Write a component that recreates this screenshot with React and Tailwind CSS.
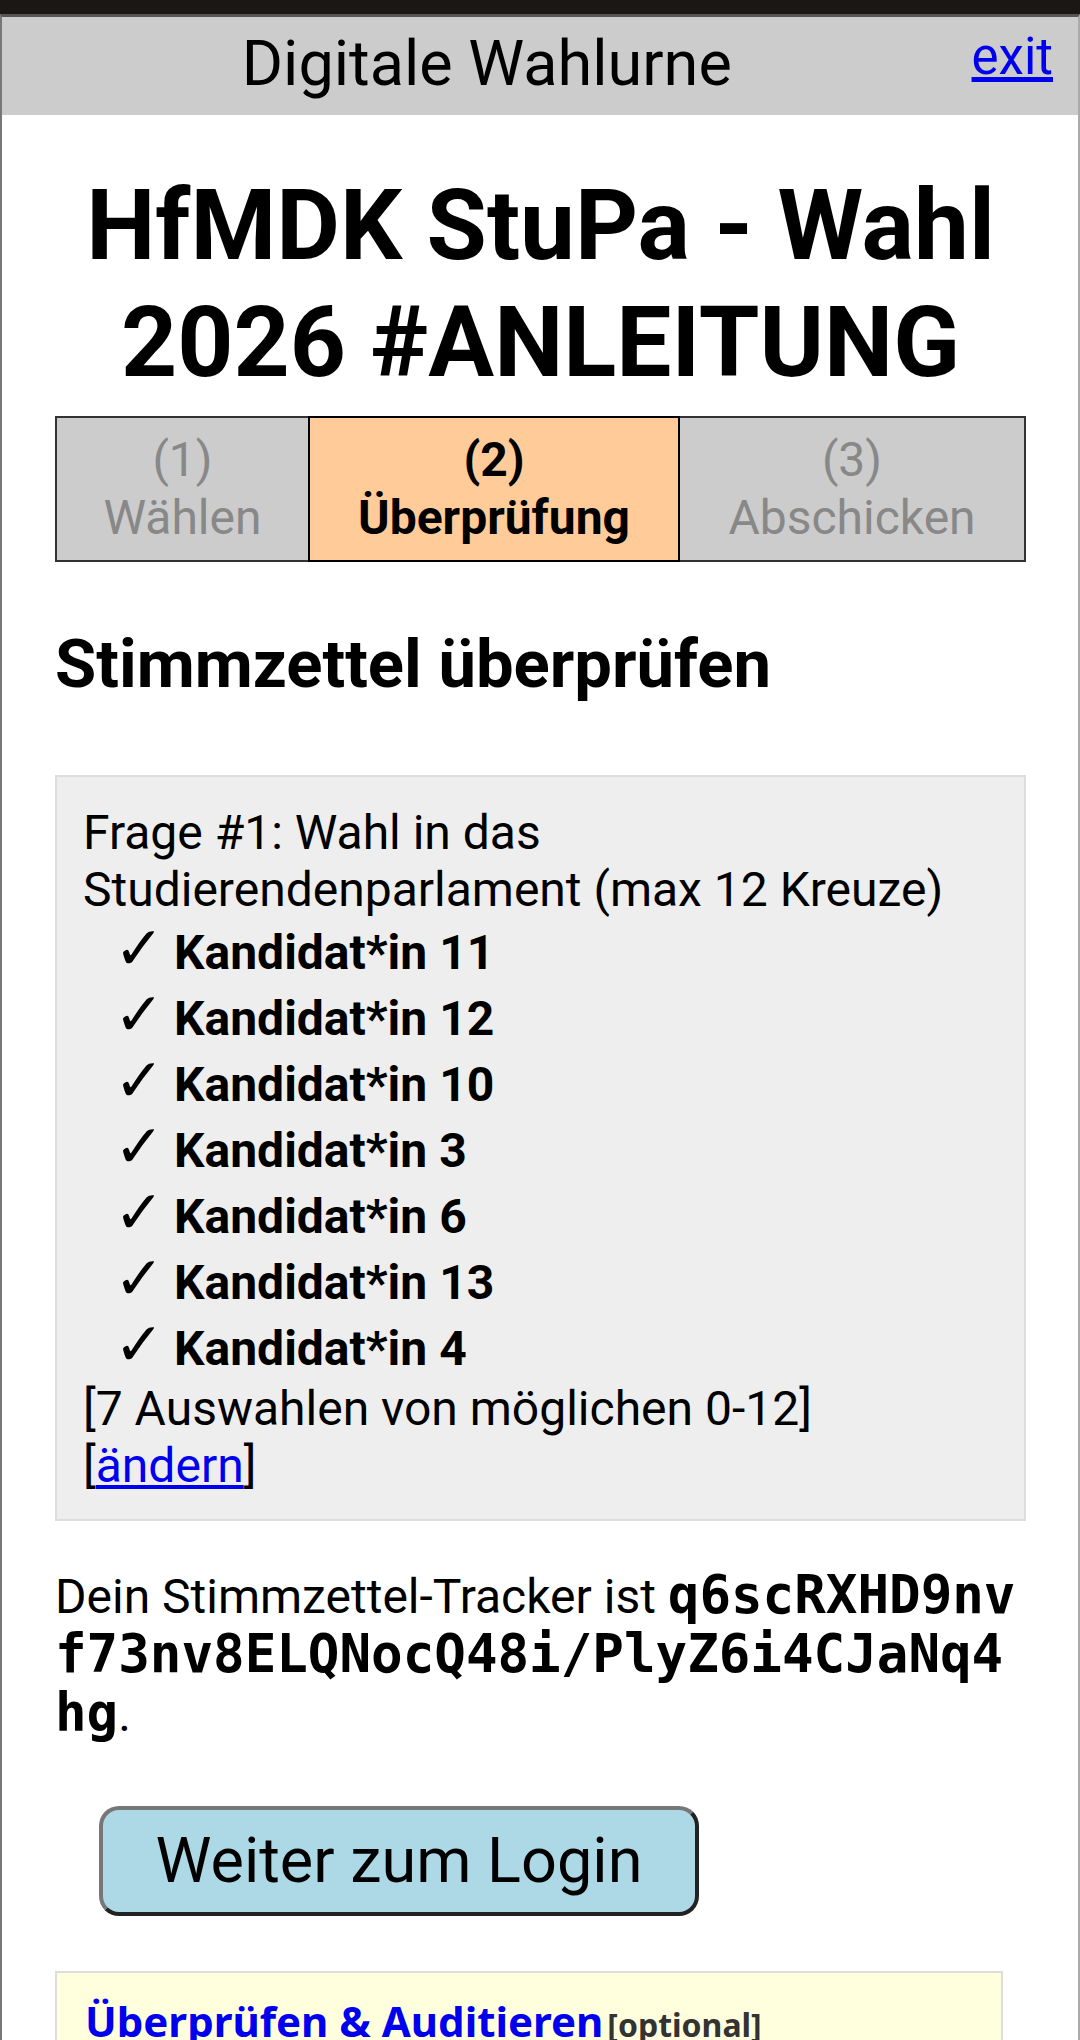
import React from 'react';

const candidates = [11, 12, 10, 3, 6, 13, 4];

const App = () => {
  return (
    <div className="min-h-screen bg-white font-['Roboto',sans-serif] text-black">
      <div className="h-[14px] bg-[#1a1714]" />
      <div className="min-h-[2026px] border-t-[3px] border-l-2 border-r-2 border-t-[#555] border-l-[#777] border-r-[#aaa]">
        {/* header */}
        <div className="flex h-[98px] items-start bg-[#cccccc] pr-[25px]">
          <div className="flex-1 pt-[10px] text-center text-[63px] leading-[74px]">Digitale Wahlurne</div>
          <a href="#" className="pt-[10px] text-[51px] leading-[60px] text-[#0000ee] underline">
            exit
          </a>
        </div>

        <div className="pl-[53px] pr-[52px]">
          <h1 className="mt-[52px] text-center text-[98px] font-bold leading-[117px]">
            HfMDK StuPa - Wahl 2026 #ANLEITUNG
          </h1>

          {/* steps */}
          <div className="mt-[15px] flex text-center text-[48px] leading-[58px]">
            <div className="w-[253px] border-y-2 border-l-2 border-[#333] bg-[#cccccc] py-[13px] text-[#888]">
              (1)
              <br />
              Wählen
            </div>
            <div className="w-[372px] border-2 border-black bg-[#ffcc99] py-[13px] font-bold">
              (2)
              <br />
              Überprüfung
            </div>
            <div className="flex-1 border-y-2 border-r-2 border-[#333] bg-[#cccccc] py-[13px] text-[#888]">
              (3)
              <br />
              Abschicken
            </div>
          </div>

          <h2 className="mt-[63px] text-[67px] font-bold leading-[78px]">Stimmzettel überprüfen</h2>

          {/* ballot review */}
          <div className="mt-[72px] border-2 border-[#dddddd] bg-[#eeeeee] pb-[25px] pl-[26px] pt-[27px] text-[48px] leading-[57px]">
            <div>Frage #1: Wahl in das Studierendenparlament (max 12 Kreuze)</div>
            {candidates.map((c) => (
              <div key={c} className="h-[66px] pl-[31px] font-bold leading-[66px]">
                <span className="inline-block w-[60px] font-['DejaVu_Sans',sans-serif] text-[60px] leading-none">✓</span>
                Kandidat*in {c}
              </div>
            ))}
            <div>[7 Auswahlen von möglichen 0-12]</div>
            <div>
              [<a href="#" className="text-[#0000ee] underline">ändern</a>]
            </div>
          </div>

          <p className="mt-[45px] text-[48px] leading-[57px]">
            Dein Stimmzettel-Tracker ist{' '}
            <span className="break-all font-['DejaVu_Sans_Mono',monospace] text-[52.5px] font-bold leading-[57px]">
              q6scRXHD9nvf73nv8ELQNocQ48i/PlyZ6i4CJaNq4hg
            </span>
            .
          </p>

          <button className="ml-[44px] mt-[63px] flex h-[110px] w-[600px] items-center justify-center rounded-[20px] border-4 border-b-[#222] border-l-[#777] border-r-[#222] border-t-[#777] bg-[#add8e6] text-[63px]">
            Weiter zum Login
          </button>

          <div className="mt-[55px] w-[948px] border-2 border-[#dddddd] bg-[#ffffdd] pb-[30px] pl-[28px] pt-[17px]">
            <a href="#" className="font-['Noto_Sans',sans-serif] text-[42px] font-bold leading-[62px] text-[#0000ee] underline">
              Überprüfen &amp; Auditieren
            </a>{' '}
            <span className="font-['Noto_Sans',sans-serif] text-[32px] font-bold text-[#333]">[optional]</span>
          </div>
        </div>
      </div>
    </div>
  );
};

export default App;
